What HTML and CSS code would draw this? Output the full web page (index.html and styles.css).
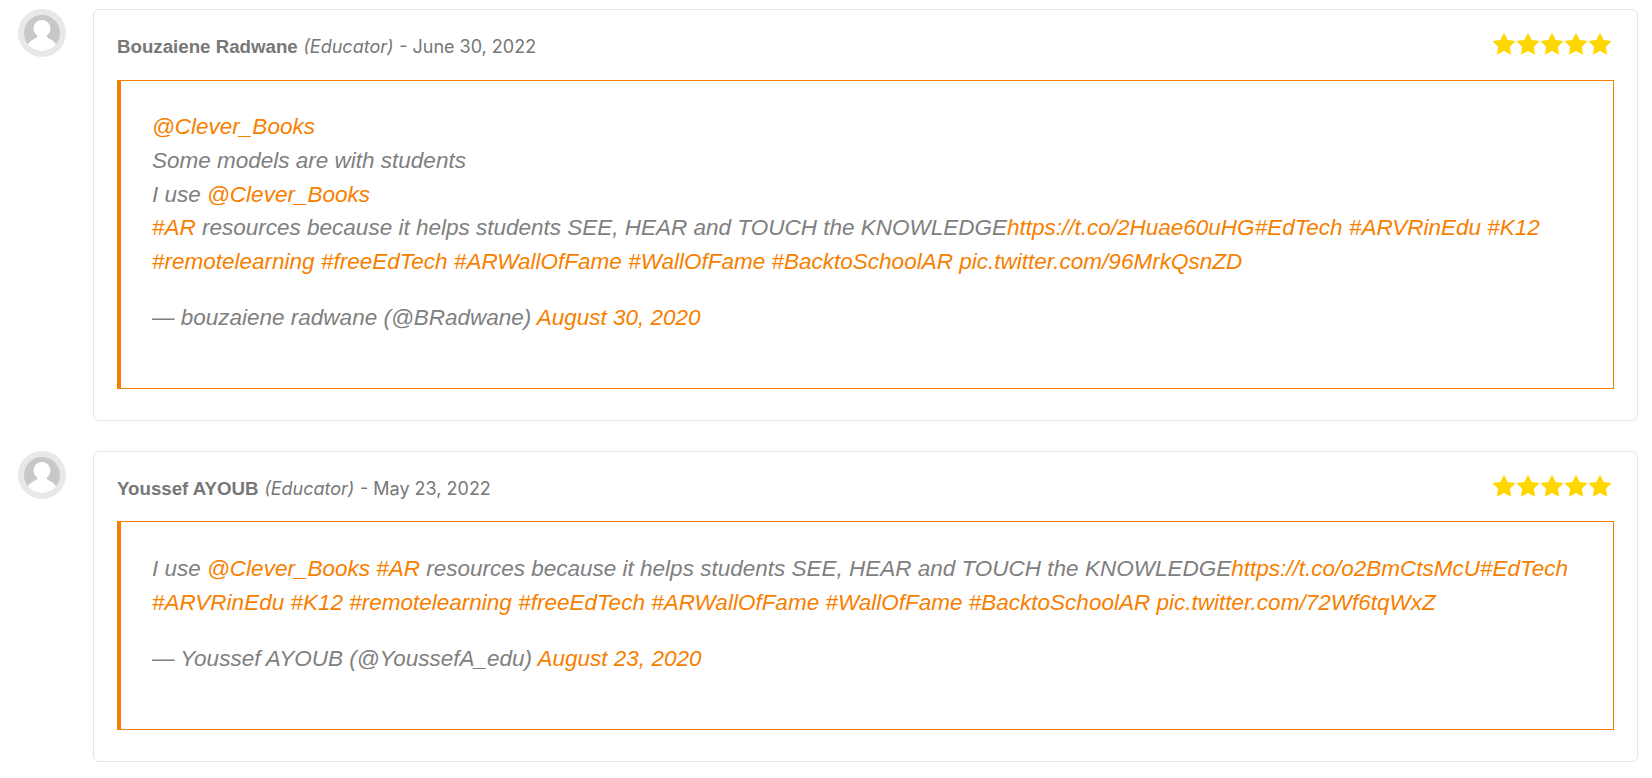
FILE: index.html
```html
<!DOCTYPE html>
<html lang="en">
<head>
  <meta charset="UTF-8">
  <meta name="viewport" content="width=device-width, initial-scale=1.0">
  <title>Reviews</title>
  <link rel="stylesheet" href="styles.css">
</head>
<body>
  <svg class="defs" width="0" height="0">
    <symbol id="star" viewBox="0 0 24 24">
      <path d="M12 .8l3.6 7.200 8 1.100-5.800 5.600 1.400 8L12 18.900l-7.200 3.800 1.400-8L.4 9.100l8-1.100z"/>
    </symbol>
    <symbol id="person" viewBox="0 0 48 48">
      <circle cx="24" cy="24" r="24" fill="#e8e8e8"/>
      <circle cx="24" cy="24" r="18" fill="#c8c8c8"/>
      <circle cx="24" cy="19.500" r="8.500" fill="#fff"/>
      <path d="M10 35.500c2-4.500 6.500-5.500 9-7v-2h10v2c2.500 1.500 7 2.500 9 7A18 18 0 0 1 24 42a18 18 0 0 1-14-6.500z" fill="#fff"/>
    </symbol>
  </svg>

  <ol class="review-list">
    <li class="review">
      <svg class="avatar"><use href="#person"/></svg>
      <div class="review-card">
        <div class="review-head">
          <p class="review-meta"><strong>Bouzaiene Radwane</strong> <em>(Educator)</em> - June 30, 2022</p>
          <div class="stars">
            <svg><use href="#star"/></svg><svg><use href="#star"/></svg><svg><use href="#star"/></svg><svg><use href="#star"/></svg><svg><use href="#star"/></svg>
          </div>
        </div>
        <blockquote class="tweet">
          <p><a href="#">@Clever_Books</a><br>
          Some models are with students<br>
          I use <a href="#">@Clever_Books</a><br>
          <a href="#">#AR</a> resources because it helps students SEE, HEAR and TOUCH the KNOWLEDGE<a href="#">https://t.co/2Huae60uHG</a><a href="#">#EdTech</a> <a href="#">#ARVRinEdu</a> <a href="#">#K12</a> <a href="#">#remotelearning</a> <a href="#">#freeEdTech</a> <a href="#">#ARWallOfFame</a> <a href="#">#WallOfFame</a> <a href="#">#BacktoSchoolAR</a> <a href="#">pic.twitter.com/96MrkQsnZD</a></p>
          <p>— bouzaiene radwane (@BRadwane) <a href="#">August 30, 2020</a></p>
        </blockquote>
      </div>
    </li>
    <li class="review">
      <svg class="avatar"><use href="#person"/></svg>
      <div class="review-card">
        <div class="review-head">
          <p class="review-meta"><strong>Youssef AYOUB</strong> <em>(Educator)</em> - May 23, 2022</p>
          <div class="stars">
            <svg><use href="#star"/></svg><svg><use href="#star"/></svg><svg><use href="#star"/></svg><svg><use href="#star"/></svg><svg><use href="#star"/></svg>
          </div>
        </div>
        <blockquote class="tweet">
          <p>I use <a href="#">@Clever_Books</a> <a href="#">#AR</a> resources because it helps students SEE, HEAR and TOUCH the KNOWLEDGE<a href="#">https://t.co/o2BmCtsMcU</a><a href="#">#EdTech</a> <a href="#">#ARVRinEdu</a> <a href="#">#K12</a> <a href="#">#remotelearning</a> <a href="#">#freeEdTech</a> <a href="#">#ARWallOfFame</a> <a href="#">#WallOfFame</a> <a href="#">#BacktoSchoolAR</a> <a href="#">pic.twitter.com/72Wf6tqWxZ</a></p>
          <p>— Youssef AYOUB (@YoussefA_edu) <a href="#">August 23, 2020</a></p>
        </blockquote>
      </div>
    </li>
  </ol>
</body>
</html>
```

FILE: styles.css
```css
body {
  margin: 0;
  background: #fff;
  font-family: Inter, "Liberation Sans", sans-serif;
  color: #777;
}
.defs {
  display: block;
  height: 0;
}
.review-list {
  list-style: none;
  margin: 0;
  padding: 9px 14px 0 18px;
}
.review {
  display: flex;
  align-items: flex-start;
  gap: 27px;
  margin-bottom: 29.75px;
}
.avatar {
  flex: none;
  width: 48px;
  height: 48px;
}
.review-card {
  flex: 1;
  min-width: 0;
  border: 1px solid #e4e4e4;
  border-radius: 6px;
  padding: 24px 23px 31px 23px;
}
.review-head {
  display: flex;
  justify-content: space-between;
  align-items: center;
  height: 24px;
  margin-bottom: 21.5px;
}
.review-meta {
  margin: 2px 0 0;
  font-size: 18px;
  line-height: 24px;
}
.review-meta strong {
  font-family: "Liberation Sans", sans-serif;
  font-weight: 700;
  font-size: 18.7px;
}
.review-meta em {
  margin: 0 0.5px;
}
.stars {
  display: flex;
  margin: -4px 2px 0 0;
}
.stars svg {
  width: 24px;
  height: 24px;
  fill: #ffd700;
}
.tweet {
  margin: 0;
  border: 1px solid #f77f00;
  border-left-width: 4px;
  padding: 29.5px 30px 53px 31px;
  font-family: "Liberation Sans", sans-serif;
  font-style: italic;
  font-size: 22.5px;
  line-height: 1.5;
  color: #808080;
}
.tweet p {
  margin: 0 0 22.5px;
}
.tweet p:last-child {
  margin-bottom: 0;
}
.tweet a {
  color: #f77f00;
  text-decoration: none;
}
```
